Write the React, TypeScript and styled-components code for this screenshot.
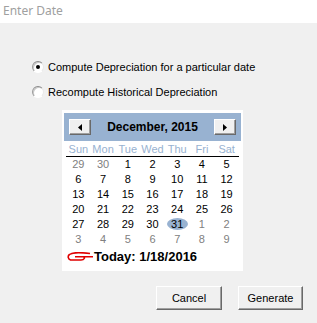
import React from "react";
import styled, { createGlobalStyle } from "styled-components";

const Global = createGlobalStyle`
  html, body { margin: 0; padding: 0; background: #f0f0f0; }
  body { font-family: "Liberation Sans", Arial, sans-serif; font-size: 11px; color: #000; }
`;

const Window = styled.div`
  width: 317px;
  height: 323px;
  background: #f0f0f0;
  display: flex;
  flex-direction: column;
  overflow: hidden;
`;

const TitleBar = styled.div`
  height: 23px;
  background: #fff;
  padding-left: 3px;
  box-sizing: border-box;
  font-family: "Noto Sans", "Liberation Sans", sans-serif;
  font-size: 12px;
  line-height: 21px;
  color: #a0a0a0;
`;

const Body = styled.div`
  display: flex;
  flex-direction: column;
  padding: 35px 0 0 32px;
`;

const RadioRow = styled.label`
  display: flex;
  align-items: center;
  height: 17px;
  margin-bottom: 8px;
  gap: 4px;
`;

const RadioCircle = styled.span<{ $checked?: boolean }>`
  width: 12px;
  height: 12px;
  box-sizing: border-box;
  border-radius: 50%;
  border: 1px solid;
  border-color: #8a8a8a #e8e8e8 #ffffff #9a9a9a;
  background: #fff;
  box-shadow: inset 1px 1px 0 #c8c8c8;
  display: flex;
  align-items: center;
  justify-content: center;
  &::after {
    content: "";
    width: 4px;
    height: 4px;
    border-radius: 50%;
    background: ${(p) => (p.$checked ? "#000" : "transparent")};
  }
`;

const Calendar = styled.div`
  margin: 2px 0 0 30px;
  width: 181px;
  background: #fff;
  padding: 3px 2px 7px 2px;
  box-sizing: border-box;
  display: flex;
  flex-direction: column;
`;

const Header = styled.div`
  height: 28px;
  background: #98b2d1;
  display: flex;
  align-items: center;
  justify-content: space-between;
  padding: 0 5px;
`;

const NavButton = styled.button`
  width: 22px;
  height: 16px;
  padding: 0;
  background: #f0f0f0;
  border: 1px solid;
  border-color: #fff #696969 #696969 #fff;
  box-shadow: inset -1px -1px 0 #a0a0a0;
  display: flex;
  align-items: center;
  justify-content: center;
`;

const MonthTitle = styled.div`
  font-weight: bold;
  font-size: 12px;
`;

const Grid = styled.div`
  display: grid;
  grid-template-columns: repeat(7, 1fr);
  margin: 0 2px;
`;

const WeekDays = styled(Grid)`
  height: 15px;
  align-items: center;
  border-bottom: 1px solid #000;
  color: #98b2d1;
`;

const Cell = styled.div<{ $muted?: boolean }>`
  height: 15px;
  line-height: 15px;
  text-align: center;
  color: ${(p) => (p.$muted ? "#808080" : "#000")};
`;

const DayName = styled.div`
  text-align: center;
`;

const Selected = styled.span`
  display: inline-block;
  width: 21px;
  height: 12px;
  line-height: 12px;
  border-radius: 50%;
  background: #98b2d1;
`;

const TodayRow = styled.div`
  display: flex;
  align-items: center;
  height: 15px;
  margin: 2px 0 0 3px;
  gap: 1px;
  font-weight: bold;
  font-size: 13px;
`;

const Buttons = styled.div`
  display: flex;
  justify-content: flex-end;
  gap: 16px;
  margin-top: 15px;
  padding-right: 14px;
`;

const Button = styled.button<{ $w: number }>`
  width: ${(p) => p.$w}px;
  height: 24px;
  font-family: "Liberation Sans", Arial, sans-serif;
  font-size: 11px;
  background: #f0f0f0;
  border: 1px solid;
  border-color: #fff #696969 #696969 #fff;
  box-shadow: inset -1px -1px 0 #a0a0a0;
  padding: 0;
  color: #000;
`;

const rows: [number, boolean][][] = [
  [[29, true], [30, true], [1, false], [2, false], [3, false], [4, false], [5, false]],
  [[6, false], [7, false], [8, false], [9, false], [10, false], [11, false], [12, false]],
  [[13, false], [14, false], [15, false], [16, false], [17, false], [18, false], [19, false]],
  [[20, false], [21, false], [22, false], [23, false], [24, false], [25, false], [26, false]],
  [[27, false], [28, false], [29, false], [30, false], [31, false], [1, true], [2, true]],
  [[3, true], [4, true], [5, true], [6, true], [7, true], [8, true], [9, true]],
];

export default function App() {
  return (
    <Window>
      <Global />
      <TitleBar>Enter Date</TitleBar>
      <Body>
        <RadioRow>
          <RadioCircle $checked />
          <span>Compute Depreciation for a particular date</span>
        </RadioRow>
        <RadioRow>
          <RadioCircle />
          <span>Recompute Historical Depreciation</span>
        </RadioRow>
        <Calendar>
          <Header>
            <NavButton>
              <svg width="4" height="7" viewBox="0 0 4 7"><path d="M4 0 L0 3.5 L4 7 Z" fill="#000" /></svg>
            </NavButton>
            <MonthTitle>December, 2015</MonthTitle>
            <NavButton>
              <svg width="4" height="7" viewBox="0 0 4 7"><path d="M0 0 L4 3.5 L0 7 Z" fill="#000" /></svg>
            </NavButton>
          </Header>
          <WeekDays>
            {["Sun", "Mon", "Tue", "Wed", "Thu", "Fri", "Sat"].map((d) => (
              <DayName key={d}>{d}</DayName>
            ))}
          </WeekDays>
          <Grid>
            {rows.flat().map(([n, muted], i) => (
              <Cell key={i} $muted={muted}>
                {n === 31 ? <Selected>{n}</Selected> : n}
              </Cell>
            ))}
          </Grid>
          <TodayRow>
            <svg width="26" height="10" viewBox="0 0 26 10">
              <path
                d="M23 1.5 C15 0.5 5 0.5 2.5 2.5 C0.5 4 0.8 7 3.5 8 L14 8 C17.5 8 18.5 5 16 4.8 L8 4.8 M15 4.8 L26 4.8"
                fill="none"
                stroke="#e00000"
                strokeWidth="1.6"
              />
            </svg>
            <span>Today: 1/18/2016</span>
          </TodayRow>
        </Calendar>
      </Body>
      <Buttons>
        <Button $w={66}>Cancel</Button>
        <Button $w={65}>Generate</Button>
      </Buttons>
    </Window>
  );
}
